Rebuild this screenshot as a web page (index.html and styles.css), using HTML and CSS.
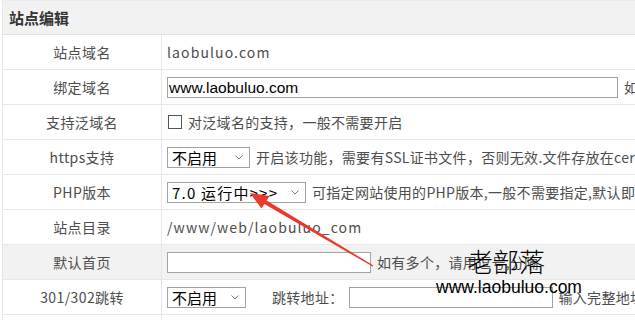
FILE: index.html
```html
<!DOCTYPE html>
<html lang="zh-CN">
<head>
<meta charset="utf-8">
<title>站点编辑</title>
<link rel="stylesheet" href="styles.css">
</head>
<body>
<div class="page">
  <div class="panel">
    <div class="head">站点编辑</div>
    <div class="row">
      <div class="label">站点域名</div>
      <div class="value"><span class="plain">laobuluo.com</span></div>
    </div>
    <div class="row">
      <div class="label">绑定域名</div>
      <div class="value"><div class="field wide">www.laobuluo.com</div><span class="note">如有多个域名，请用空格分隔</span></div>
    </div>
    <div class="row">
      <div class="label">支持泛域名</div>
      <div class="value"><span class="check"></span><span class="note">对泛域名的支持，一般不需要开启</span></div>
    </div>
    <div class="row">
      <div class="label">https支持</div>
      <div class="value"><div class="select s-short"><span>不启用</span><svg class="chev" width="8" height="5" viewBox="0 0 8 5"><path d="M0.5 0.5 L4 4 L7.5 0.5" fill="none" stroke="#777" stroke-width="1"/></svg></div><span class="note">开启该功能，需要有SSL证书文件，否则无效.文件存放在cert目录下</span></div>
    </div>
    <div class="row">
      <div class="label">PHP版本</div>
      <div class="value"><div class="select s-php"><span class="ver">7.0 运行中&gt;&gt;&gt;</span><svg class="chev" width="8" height="5" viewBox="0 0 8 5"><path d="M0.5 0.5 L4 4 L7.5 0.5" fill="none" stroke="#777" stroke-width="1"/></svg></div><span class="note">可指定网站使用的PHP版本,一般不需要指定,默认即可</span></div>
    </div>
    <div class="row">
      <div class="label">站点目录</div>
      <div class="value"><span class="plain">/www/web/laobuluo_com</span></div>
    </div>
    <div class="row grey">
      <div class="label">默认首页</div>
      <div class="value"><div class="field mid"></div><span class="note">如有多个，请用逗号,分隔</span></div>
    </div>
    <div class="row">
      <div class="label">301/302跳转</div>
      <div class="value"><div class="select s-jump"><span>不启用</span><svg class="chev" width="8" height="5" viewBox="0 0 8 5"><path d="M0.5 0.5 L4 4 L7.5 0.5" fill="none" stroke="#777" stroke-width="1"/></svg></div><span class="note jump-label">跳转地址：</span><div class="field mid"></div><span class="note">输入完整地址</span></div>
    </div>
    <div class="row">
      <div class="label"></div>
      <div class="value"></div>
    </div>
  </div>

  <svg class="arrow" width="635" height="320" viewBox="0 0 635 320">
    <polygon points="250,193 269.5,196 266.6,200.6 373.4,265.5 372.6,266.6 264.4,204 261.5,208.6" fill="#e8392c"/>
  </svg>

  <div class="mark">
    <div class="mark-cn">老部落</div>
    <div class="mark-url">www.laobuluo.com</div>
  </div>
</div>
</body>
</html>
```

FILE: styles.css
```css
html, body {
  margin: 0;
  padding: 0;
  background: #ffffff;
}

.page {
  position: relative;
  width: 635px;
  height: 320px;
  overflow: hidden;
  font-family: "Noto Sans CJK SC", "Microsoft YaHei", sans-serif;
  font-size: 14px;
  color: #4d4d4d;
}

.panel {
  margin-left: 2px;
  width: 1000px;
  border-left: 1px solid #e6e6e6;
  border-top: 1px solid #ececec;
}

.head {
  height: 33px;
  display: flex;
  align-items: center;
  padding-left: 6px;
  background: #f2f2f3;
  border-bottom: 1px solid #e2e2e2;
  font-weight: bold;
  font-size: 15px;
  color: #333333;
}

.row {
  display: flex;
  height: 34px;
  border-bottom: 1px solid #e8e8e8;
}

.row.grey {
  background: #f2f2f2;
}

.label {
  width: 158px;
  flex: none;
  display: flex;
  align-items: center;
  justify-content: center;
  border-right: 1px solid #e8e8e8;
  letter-spacing: 0.4px;
}

.value {
  flex: 1;
  display: flex;
  align-items: center;
  padding-left: 5px;
  white-space: nowrap;
}

.plain {
  letter-spacing: 1.1px;
}

.note {
  margin-left: 6px;
  letter-spacing: 0.3px;
}

.field {
  box-sizing: border-box;
  height: 21px;
  border: 1px solid #a3a3a3;
  background: #ffffff;
  font-family: "Liberation Sans", Arial, sans-serif;
  font-size: 15.5px;
  line-height: 19px;
  color: #000000;
  padding-left: 1px;
}

.field.wide {
  width: 451px;
}

.field.mid {
  width: 204px;
}

.check {
  box-sizing: border-box;
  width: 14px;
  height: 14px;
  margin-left: 1px;
  border: 1px solid #555555;
  background: #ffffff;
}

.select {
  box-sizing: border-box;
  height: 21px;
  display: flex;
  align-items: center;
  justify-content: space-between;
  border: 1px solid #a3a3a3;
  background: #ffffff;
  padding: 0 6px 0 4px;
  color: #000000;
  font-size: 15px;
}

.s-short { width: 83px; }
.s-jump { width: 79px; }
.s-php { width: 139px; }

.ver {
  letter-spacing: 1.2px;
}

.chev {
  display: block;
}

.jump-label {
  margin-left: 26px;
  margin-right: 5px;
}

.arrow {
  position: absolute;
  left: 0;
  top: 0;
}

.mark {
  position: absolute;
  left: 434px;
  top: 244px;
  width: 150px;
  display: flex;
  flex-direction: column;
  align-items: center;
  color: #000000;
}

.mark-cn {
  font-family: "Noto Sans CJK SC", sans-serif;
  font-weight: 300;
  font-size: 26px;
  line-height: 34px;
  letter-spacing: 0;
  margin-right: 6px;
}

.mark-url {
  font-family: "Liberation Sans", Arial, sans-serif;
  font-size: 17.5px;
  line-height: 20px;
  margin-top: -1px;
}
```
